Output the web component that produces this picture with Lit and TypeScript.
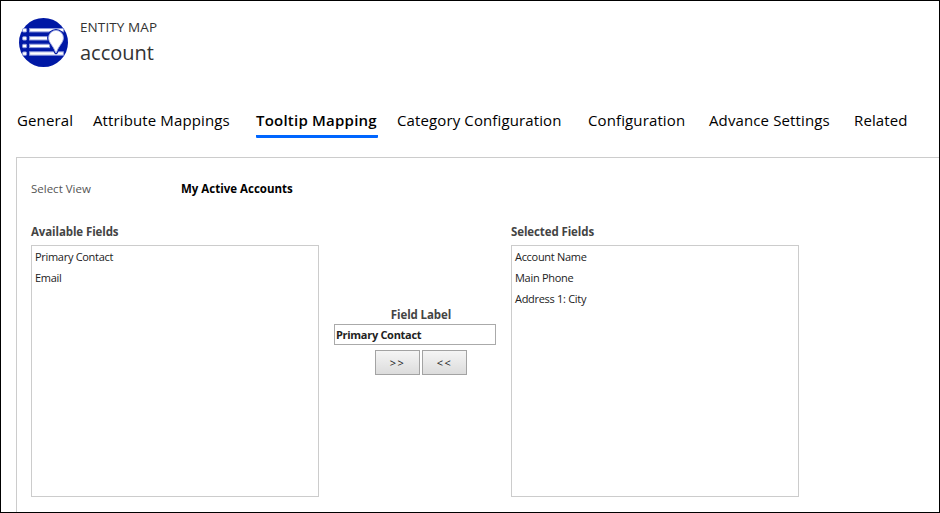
import { LitElement, html, css } from "lit";
import { customElement, property } from "lit/decorators.js";

@customElement("entity-icon")
class EntityIcon extends LitElement {
  static styles = css`
    :host { display: block; width: 49px; height: 49px; }
    svg { display: block; }
  `;
  render() {
    return html`<svg width="49" height="49" viewBox="0 0 49 49">
      <circle cx="24.5" cy="24.5" r="24.5" fill="#0018a5" />
      <g fill="#fff" stroke="#8c98dc" stroke-width="1">
        <rect x="3.6" y="10.6" width="4" height="3.4" rx=".8" />
        <rect x="3.6" y="18.7" width="4" height="3.4" rx=".8" />
        <rect x="3.6" y="26.3" width="4" height="3.4" rx=".8" />
        <rect x="3.6" y="33.9" width="4" height="3.4" rx=".8" />
        <rect x="10.6" y="10.5" width="34" height="3.4" />
        <rect x="10.6" y="18.6" width="19" height="3.4" />
        <rect x="10.6" y="26.2" width="20" height="3.4" />
        <rect x="10.6" y="33.8" width="33.8" height="3.4" />
      </g>
      <path d="M37 12.4a7.4 7.4 0 0 0-7.4 7.4c0 5 4.6 7.5 6.9 14.4q.5 1.2 1 0C39.8 27.3 44.4 24.8 44.4 19.8a7.4 7.4 0 0 0-7.4-7.4z"
        fill="#0018a5" stroke="#0018a5" stroke-width="3" />
      <path d="M37 12.4a7.4 7.4 0 0 0-7.4 7.4c0 5 4.6 7.5 6.9 14.4q.5 1.2 1 0C39.8 27.3 44.4 24.8 44.4 19.8a7.4 7.4 0 0 0-7.4-7.4z"
        fill="#fff" stroke="#a5afe4" stroke-width=".9" />
    </svg>`;
  }
}

@customElement("field-list")
class FieldList extends LitElement {
  @property() heading = "";
  @property({ attribute: false }) items: string[] = [];
  static styles = css`
    :host { display: block; width: 288px; }
    .heading { height: 22px; line-height: 17px; font-weight: 700; font-size: 11.5px; color: #444; letter-spacing: -.1px; }
    .box { box-sizing: border-box; height: 252px; border: 1px solid #ccc; padding: 0 3px; }
    .item { height: 21px; line-height: 21px; font-size: 11px; color: #222; letter-spacing: -.3px; }
  `;
  render() {
    return html`<div class="heading">${this.heading}</div>
      <div class="box">${this.items.map((i) => html`<div class="item">${i}</div>`)}</div>`;
  }
}

@customElement("app-root")
class AppRoot extends LitElement {
  static styles = css`
    :host {
      display: block; box-sizing: border-box; height: 513px; overflow: hidden;
      border: 1px solid #000; background: #fff;
      font-family: "Open Sans", "Noto Sans", sans-serif; color: #000;
    }
    header { box-sizing: border-box; display: flex; gap: 12px; padding: 17px 0 0 18px; height: 89px; }
    .kind { font-size: 13.5px; line-height: 18px; color: #333; letter-spacing: .1px; }
    .name { font-size: 20px; line-height: 34px; color: #333; }
    nav {
      display: grid; grid-template-columns: 76px 163px 141px 191px 121px 145px auto;
      padding-left: 16px; height: 49px; font-size: 15px; line-height: 24px; letter-spacing: .12px;
      justify-content: start; align-items: start; margin-top: 18px; white-space: nowrap;
    }
    .active { font-weight: 600; height: 27px; border-bottom: 3px solid #0066ff; border-radius: 0 0 1px 1px; width: 122px; letter-spacing: .22px; }
    .panel { margin-left: 15px; border: solid #ccc; border-width: 1px 0 0 1px; padding: 22px 0 0 14px; height: 400px; }
    .view { display: flex; height: 43px; font-size: 11.5px; line-height: 18px; }
    .view span { width: 150px; color: #555; }
    .view b { font-weight: 700; }
    .columns { display: flex; gap: 15px; }
    .middle { width: 162px; padding-top: 83px; text-align: center; font-size: 11.5px; font-weight: 700; color: #444; }
    .label { line-height: 18px; padding-left: 12px; letter-spacing: -.1px; }
    .input { box-sizing: border-box; height: 21px; border: 1px solid #aaa; text-align: left; padding-left: 1px; line-height: 19px; font-size: 11px; color: #222; margin-bottom: 5px; letter-spacing: -.3px; }
    .buttons { display: flex; gap: 2px; padding-left: 41px; }
    button {
      box-sizing: border-box; width: 45px; height: 25px; padding: 0; border: 1px solid #a3a3a3;
      background: linear-gradient(#f5f5f5, #dcdcdc); font: 11px "Open Sans", sans-serif; color: #222; letter-spacing: 1.5px;
    }
  `;
  render() {
    return html`
      <header>
        <entity-icon></entity-icon>
        <div><div class="kind">ENTITY MAP</div><div class="name">account</div></div>
      </header>
      <nav>
        <span>General</span><span>Attribute Mappings</span><span class="active">Tooltip Mapping</span>
        <span>Category Configuration</span><span>Configuration</span><span>Advance Settings</span><span>Related</span>
      </nav>
      <section class="panel">
        <div class="view"><span>Select View</span><b>My Active Accounts</b></div>
        <div class="columns">
          <field-list heading="Available Fields" .items=${["Primary Contact", "Email"]}></field-list>
          <div class="middle">
            <div class="label">Field Label</div>
            <div class="input">Primary Contact</div>
            <div class="buttons"><button>&gt;&gt;</button><button>&lt;&lt;</button></div>
          </div>
          <field-list heading="Selected Fields" .items=${["Account Name", "Main Phone", "Address 1: City"]}></field-list>
        </div>
      </section>`;
  }
}
